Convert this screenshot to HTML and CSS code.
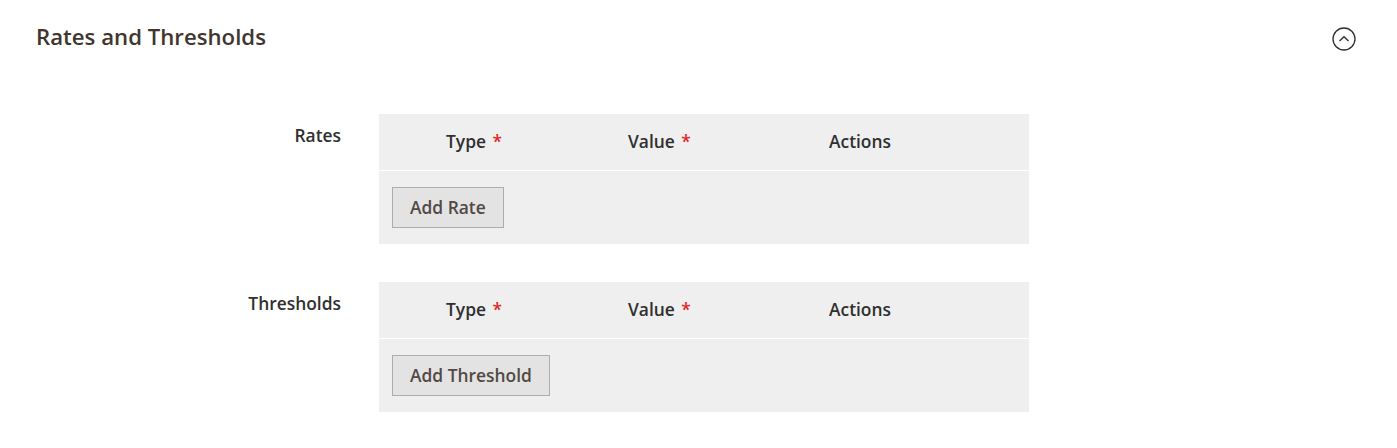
FILE: index.html
```html
<!DOCTYPE html>
<html lang="en">
<head>
<meta charset="utf-8">
<title>Rates and Thresholds</title>
<link rel="stylesheet" href="styles.css">
</head>
<body>
<section class="section">
  <header class="section-head">
    <h2 class="section-title">Rates and Thresholds</h2>
    <button class="toggle" type="button" aria-label="Collapse">
      <svg width="24" height="24" viewBox="0 0 24 24" fill="none" stroke="#303030">
        <circle cx="12" cy="12" r="11" stroke-width="1.3"/>
        <path d="M7.5 14 L12 9.8 L16.5 14" stroke-width="1.4"/>
      </svg>
    </button>
  </header>

  <div class="field">
    <div class="field-label">Rates</div>
    <div class="dyn-table">
      <div class="dyn-head">
        <div class="th">Type <span class="req">*</span></div>
        <div class="th">Value <span class="req">*</span></div>
        <div class="th">Actions</div>
      </div>
      <div class="dyn-body">
        <button class="btn" type="button">Add Rate</button>
      </div>
    </div>
  </div>

  <div class="field">
    <div class="field-label">Thresholds</div>
    <div class="dyn-table">
      <div class="dyn-head">
        <div class="th">Type <span class="req">*</span></div>
        <div class="th">Value <span class="req">*</span></div>
        <div class="th">Actions</div>
      </div>
      <div class="dyn-body">
        <button class="btn" type="button">Add Threshold</button>
      </div>
    </div>
  </div>
</section>
</body>
</html>
```
FILE: styles.css
```css
* { box-sizing: border-box; }
html, body {
  margin: 0;
  padding: 0;
  background: #ffffff;
}
body {
  font-family: "Open Sans", "Liberation Sans", sans-serif;
  color: #303030;
}
.section {
  padding: 0 41px 0 36px;
}
.section-head {
  display: flex;
  align-items: center;
  justify-content: space-between;
  height: 76px;
}
.section-title {
  margin: 0;
  font-size: 22.2px;
  font-weight: 600;
  color: #41362f;
  line-height: 30px;
  position: relative;
  top: -1px;
}
.toggle {
  border: 0;
  background: transparent;
  padding: 0;
  width: 24px;
  height: 24px;
  display: block;
  margin-top: 2px;
}
.toggle svg { display: block; }

.field {
  display: flex;
  align-items: flex-start;
  margin-top: 38px;
}
.field-label {
  width: 343px;
  flex: none;
  text-align: right;
  padding-right: 38px;
  font-size: 17.4px;
  font-weight: 600;
  line-height: 22px;
  padding-top: 10px;
  color: #303030;
}
.dyn-table {
  width: 650px;
  background: #efefef;
}
.dyn-head {
  display: grid;
  grid-template-columns: 182px 201px 1fr;
  height: 57px;
  padding-bottom: 2px;
  align-items: center;
  border-bottom: 1px solid #ffffff;
}
.th {
  padding-left: 67px;
  font-size: 17.4px;
  font-weight: 600;
  line-height: 22px;
  color: #303030;
}
.req {
  color: #e22626;
  margin-left: 2px;
}
.dyn-body {
  padding: 16px 13px 16px;
}
.btn {
  display: block;
  font-family: "Open Sans", "Liberation Sans", sans-serif;
  font-size: 17.4px;
  font-weight: 600;
  line-height: 22px;
  color: #514943;
  background: #e3e3e3;
  border: 1px solid #adadad;
  padding: 8px 17px 9px;
  border-radius: 0;
}
```
